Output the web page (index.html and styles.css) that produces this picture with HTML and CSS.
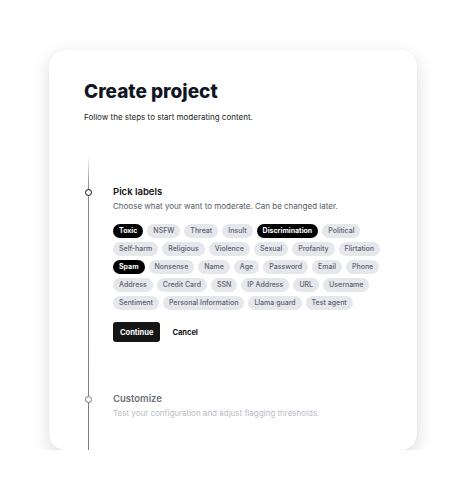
FILE: index.html
```html
<!DOCTYPE html>
<html lang="en">
<head>
  <meta charset="UTF-8">
  <meta name="viewport" content="width=device-width, initial-scale=1.0"/>
  <title>Create project</title>
  <link rel="stylesheet" href="styles.css">
</head>
<body>
  <div class="card">
    <h1>Create project</h1>
    <p class="lead">Follow the steps to start moderating content.</p>

    <div class="steps">
      <!-- step 1: labels -->
      <div class="step active">
        <span class="dot"></span>
        <h3>Pick labels</h3>
        <p class="desc">Choose what your want to moderate. Can be changed later.</p>

        <div class="tags">
          <span class="tag on">Toxic</span>
          <span class="tag">NSFW</span>
          <span class="tag">Threat</span>
          <span class="tag">Insult</span>
          <span class="tag on">Discrimination</span>
          <span class="tag">Political</span>
          <span class="tag">Self-harm</span>
          <span class="tag">Religious</span>
          <span class="tag">Violence</span>
          <span class="tag">Sexual</span>
          <span class="tag">Profanity</span>
          <span class="tag">Flirtation</span>
          <span class="tag on">Spam</span>
          <span class="tag">Nonsense</span>
          <span class="tag">Name</span>
          <span class="tag">Age</span>
          <span class="tag">Password</span>
          <span class="tag">Email</span>
          <span class="tag">Phone</span>
          <span class="tag">Address</span>
          <span class="tag">Credit Card</span>
          <span class="tag">SSN</span>
          <span class="tag">IP Address</span>
          <span class="tag">URL</span>
          <span class="tag">Username</span>
          <span class="tag">Sentiment</span>
          <span class="tag">Personal Information</span>
          <span class="tag">Llama guard</span>
          <span class="tag">Test agent</span>
        </div>

        <div class="actions">
          <button class="btn-primary">Continue</button>
          <button class="btn-link">Cancel</button>
        </div>
      </div>

      <!-- step 2: customize -->
      <div class="step">
        <span class="dot"></span>
        <h3>Customize</h3>
        <p class="desc">Test your configuration and adjust flagging thresholds.</p>
      </div>
    </div>
  </div>
</body>
</html>
```

FILE: styles.css
```css
* {
  box-sizing: border-box;
  margin: 0;
  padding: 0;
}

body {
  background: #ffffff;
  font-family: Inter, "Noto Sans", sans-serif;
  color: #111827;
  padding: 50px 0 0 49px;
}

.card {
  width: 368px;
  height: 400px;
  background: #fff;
  border-radius: 16px;
  box-shadow: 0 6px 18px rgba(0, 0, 0, 0.14), 0 0 2px rgba(0, 0, 0, 0.06);
  padding: 30px 35px 0;
  overflow: hidden;
}

h1 {
  font-size: 19px;
  font-weight: 800;
  line-height: 24px;
  color: #0f1624;
}

.lead {
  font-size: 8px;
  line-height: 12px;
  margin-top: 7px;
  color: #222;
}

.steps {
  position: relative;
  margin-top: 33px;
  padding: 29px 0 0 29px;
  height: 300px;
}

.steps::before {
  content: "";
  position: absolute;
  left: 4px;
  top: 0;
  bottom: 0;
  width: 1px;
  background: linear-gradient(to bottom, rgba(120, 120, 128, 0) 0, #8a8a90 30px, #7c7c82 100%);
}

.step {
  position: relative;
}

.dot {
  position: absolute;
  left: -28px;
  top: 4px;
  width: 7px;
  height: 7px;
  border-radius: 50%;
  background: #fff;
  border: 1.3px solid #111;
}

.step h3 {
  font-size: 9.5px;
  font-weight: 600;
  line-height: 14px;
  color: #111;
}

.desc {
  font-size: 8px;
  line-height: 12px;
  margin-top: 1px;
  color: #555b66;
}

.tags {
  display: flex;
  flex-wrap: wrap;
  gap: 4px;
  margin-top: 12px;
}

.tag {
  display: inline-block;
  height: 14px;
  line-height: 14px;
  padding: 0 6px;
  border-radius: 7px;
  background: #e6e7eb;
  color: #5b6170;
  font-size: 7px;
  font-weight: 500;
}

.tag.on {
  background: #000;
  color: #fff;
  font-weight: 700;
}

.actions {
  display: flex;
  align-items: center;
  gap: 12px;
  margin-top: 12px;
}

button {
  font-family: inherit;
  border: none;
  cursor: pointer;
  font-size: 7.5px;
  font-weight: 700;
}

.btn-primary {
  height: 20px;
  padding: 0 7px;
  background: #161616;
  color: #fff;
  border-radius: 3px;
}

.btn-link {
  background: none;
  color: #111;
}

.step + .step {
  margin-top: 50px;
}

.step + .step .dot {
  border-color: #777;
}

.step + .step h3 {
  color: #6b6f78;
}

.step + .step .desc {
  color: #b9bcc4;
}
```
